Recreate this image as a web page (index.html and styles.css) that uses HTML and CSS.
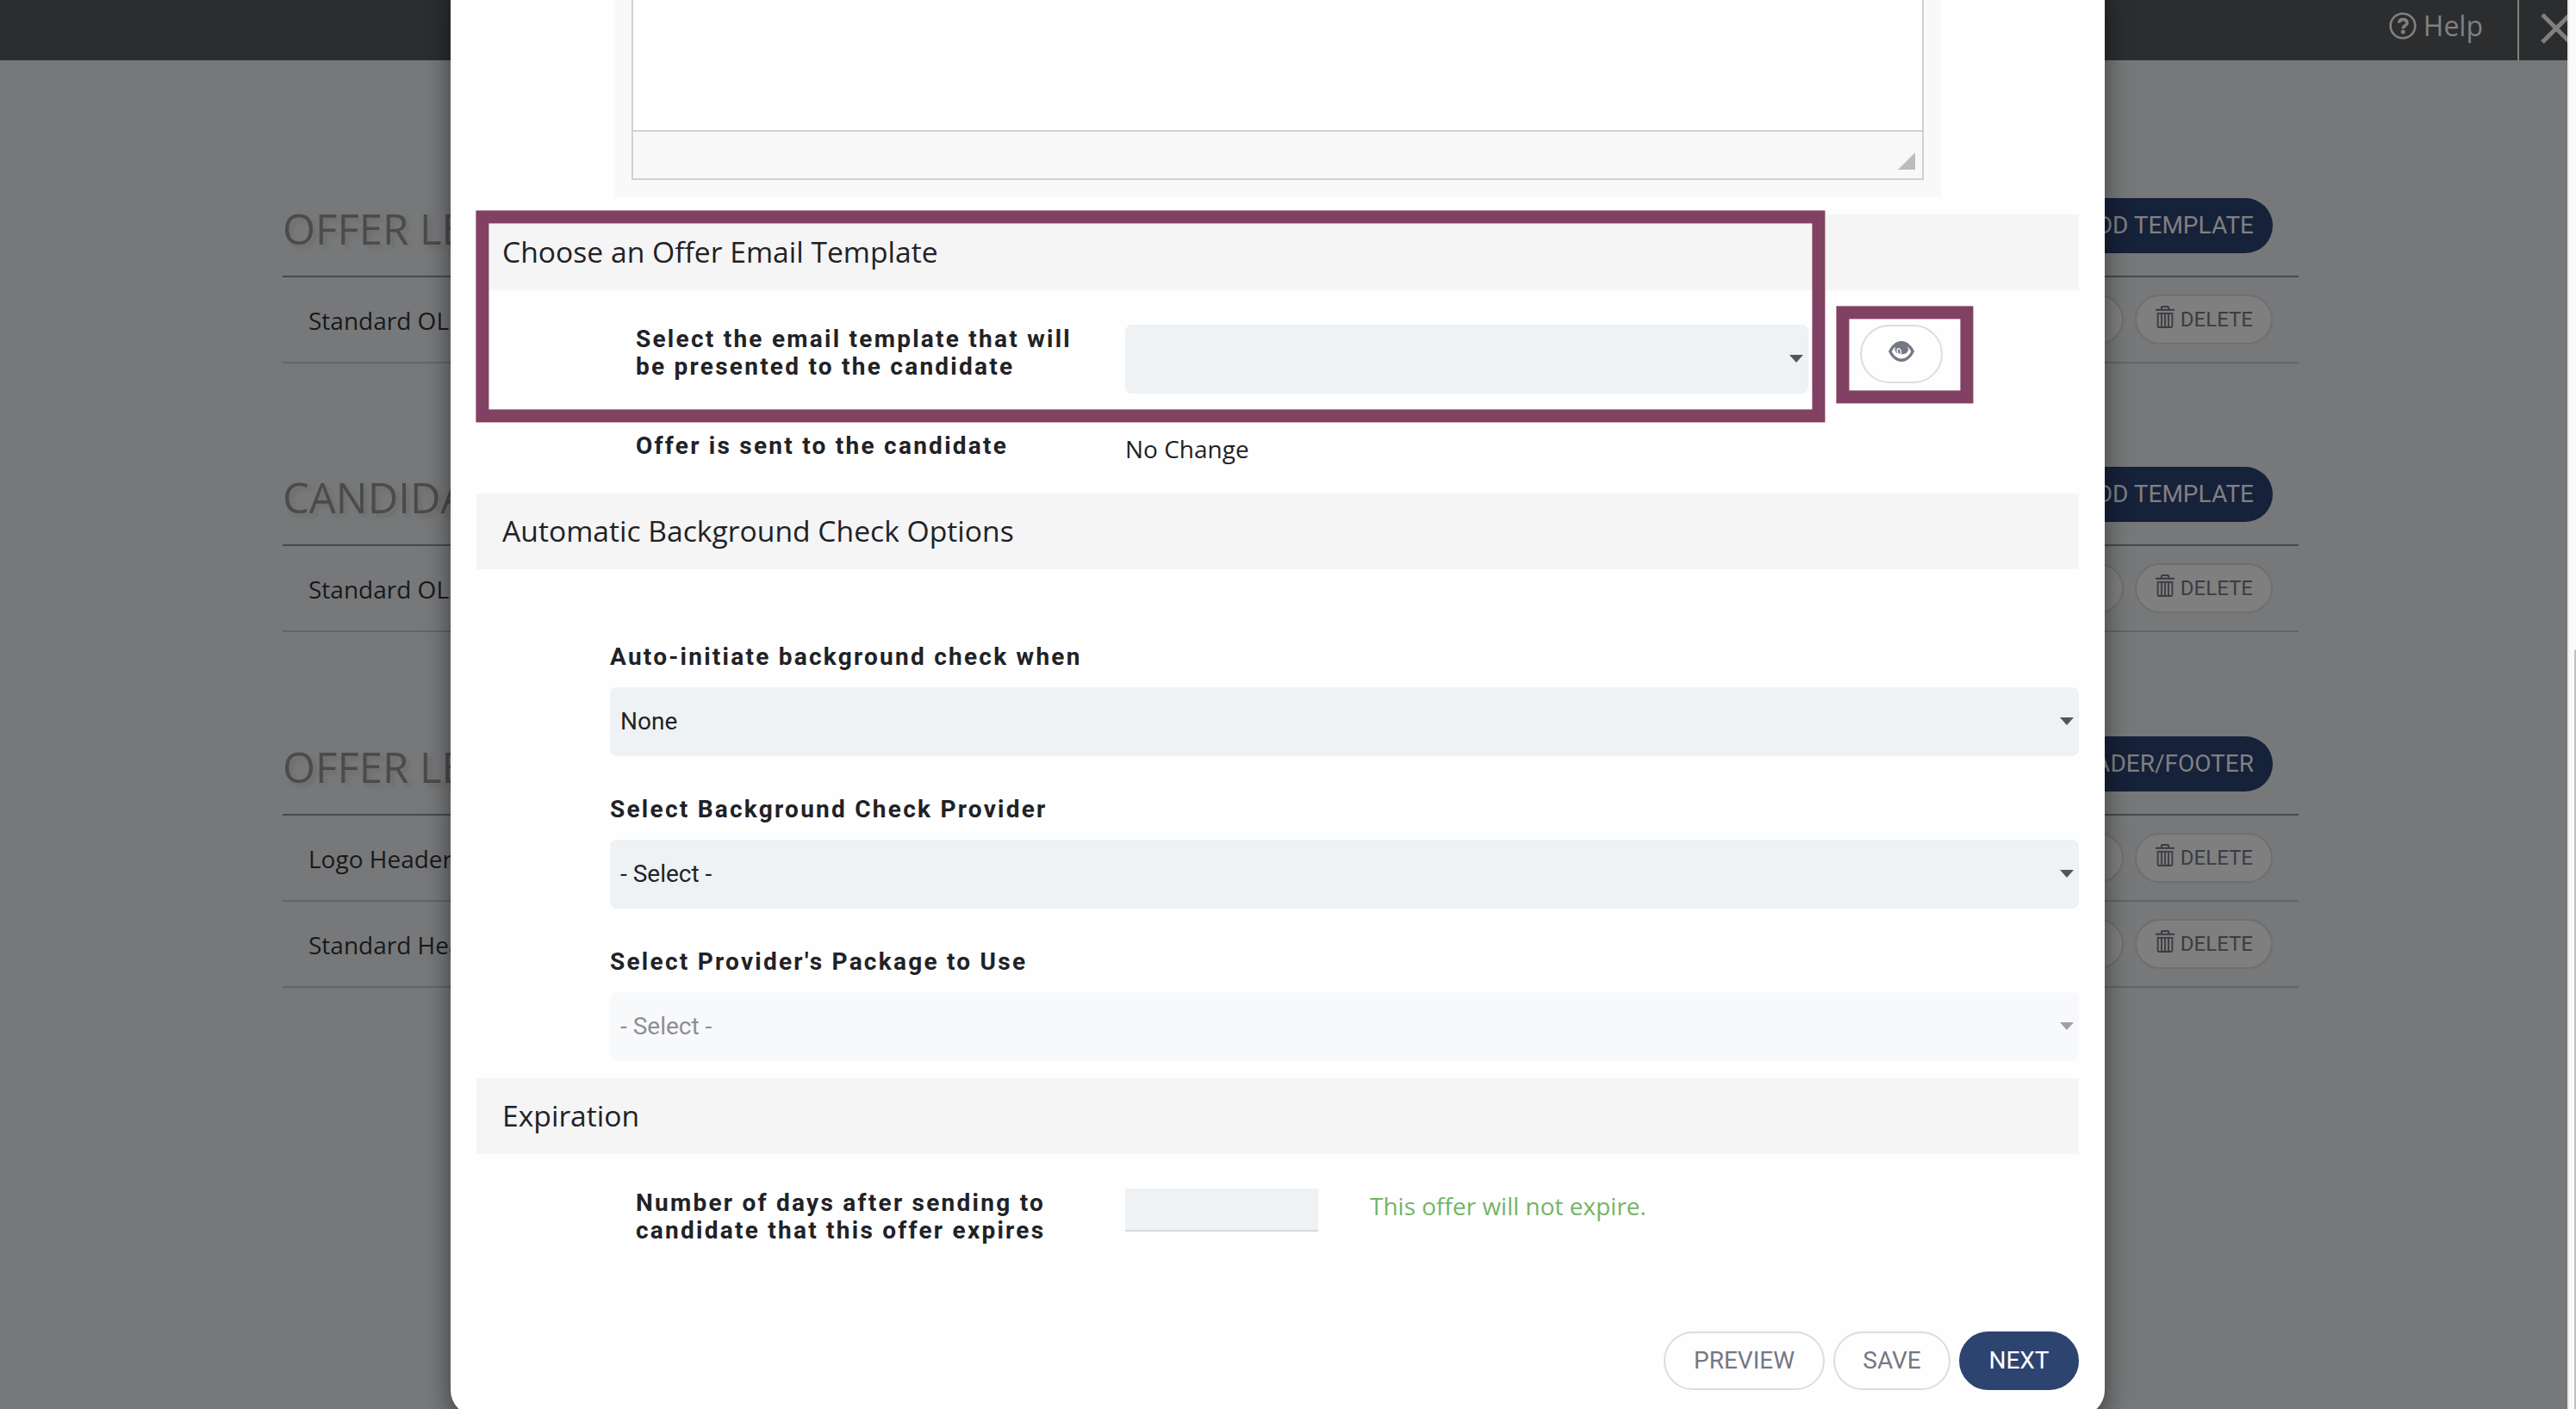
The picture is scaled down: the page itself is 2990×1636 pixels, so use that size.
FILE: index.html
```html
<!DOCTYPE html>
<html lang="en">
<head>
<meta charset="utf-8">
<title>Offer Letter Templates</title>
<link rel="stylesheet" href="styles.css">
</head>
<body>
<svg width="0" height="0" class="defs">
	<symbol id="trash" viewBox="0 0 22 26">
		<path d="M0 4.8h22M6.800 4V2.400q0-1.400 1.400-1.400h5.600q1.400 0 1.400 1.400V4" fill="none" stroke="currentColor" stroke-width="2"/>
		<path d="M2.600 8.800h16.800v14.700q0 1.500-1.500 1.500H4.100q-1.500 0-1.500-1.500zM7 9v15M11 9v15M15 9v15" fill="none" stroke="currentColor" stroke-width="1.800"/>
	</symbol>
</svg>
<div class="page">
	<div class="topbar">
		<div class="help">
			<svg width="32" height="32" viewBox="0 0 32 32">
				<circle cx="16" cy="16" r="14.300" fill="none" stroke="currentColor" stroke-width="2.600"/>
				<path d="M11.400 12.600q.4-4 4.800-4t4.800 3.600q0 2-2.200 3.400-2.400 1.400-2.400 3.600" fill="none" stroke="currentColor" stroke-width="3.600"/>
				<circle cx="16.200" cy="22.900" r="2.500" fill="currentColor"/>
			</svg>
			<span>Help</span>
		</div>
		<div class="close">
			<svg width="36" height="36" viewBox="0 0 36 36"><path d="M2 2l32 32M34 2L2 34" stroke="currentColor" stroke-width="5"/></svg>
		</div>
	</div>
	<div class="content">
		<div class="group">
			<div class="group-head"><h2>OFFER LE</h2><span class="add">ADD TEMPLATE</span></div>
			<div class="row"><span class="name">Standard OL</span><span class="pill">EDIT</span><span class="pill"><svg width="22" height="26"><use href="#trash"/></svg>DELETE</span></div>
		</div>
		<div class="group">
			<div class="group-head"><h2>CANDIDA</h2><span class="add">ADD TEMPLATE</span></div>
			<div class="row"><span class="name">Standard OL</span><span class="pill">EDIT</span><span class="pill"><svg width="22" height="26"><use href="#trash"/></svg>DELETE</span></div>
		</div>
		<div class="group">
			<div class="group-head"><h2>OFFER LE</h2><span class="add">HEADER/FOOTER</span></div>
			<div class="row"><span class="name">Logo Header</span><span class="pill">EDIT</span><span class="pill"><svg width="22" height="26"><use href="#trash"/></svg>DELETE</span></div>
			<div class="row"><span class="name">Standard Hea</span><span class="pill">EDIT</span><span class="pill"><svg width="22" height="26"><use href="#trash"/></svg>DELETE</span></div>
		</div>
	</div>

	<div class="modal">
		<div class="editor">
			<div class="editor-box">
				<div class="editor-text"></div>
				<div class="editor-foot"><i class="grip"></i></div>
			</div>
		</div>

		<h3>Choose an Offer Email Template</h3>
		<div class="field template">
			<label>Select the email template that will<br>be presented to the candidate</label>
			<div class="select small"><i class="caret"></i></div>
			<div class="eye">
				<svg width="30" height="24" viewBox="0 0 30 24">
					<path d="M15 0C22 0 27.500 6.500 30 12 27.500 17.500 22 24 15 24S2.500 17.500 0 12C2.500 6.500 8 0 15 0z" fill="currentColor"/>
					<path d="M8 6.500Q5 9 3.800 12.200 8 20.500 15 20.500t11.200-8.300Q25 9 22 6.500q1 2 1 4a8 6.500 0 0 1-15.500 0q0-2 .5-4z" fill="#fff"/>
					<ellipse cx="12.300" cy="12" rx="2" ry="3.400" fill="none" stroke="#fff" stroke-width="1.300" transform="rotate(-18 12.300 12)"/>
				</svg>
			</div>
		</div>
		<div class="field sent">
			<label>Offer is sent to the candidate</label>
			<span class="value">No Change</span>
		</div>

		<h3>Automatic Background Check Options</h3>
		<div class="checks">
			<label>Auto-initiate background check when</label>
			<div class="select">None<i class="caret"></i></div>
			<label>Select Background Check Provider</label>
			<div class="select">- Select -<i class="caret"></i></div>
			<label>Select Provider's Package to Use</label>
			<div class="select disabled">- Select -<i class="caret"></i></div>
		</div>

		<h3>Expiration</h3>
		<div class="field days">
			<label>Number of days after sending to<br>candidate that this offer expires</label>
			<div class="input"></div>
			<span class="note">This offer will not expire.</span>
		</div>

		<div class="buttons">
			<span class="btn preview">PREVIEW</span>
			<span class="btn save">SAVE</span>
			<span class="btn next">NEXT</span>
		</div>
	</div>
	<div class="mark mark-template"></div>
	<div class="mark mark-eye"></div>
</div>
<div class="scrollbar"><div class="thumb"></div></div>
</body>
</html>
```
FILE: styles.css
```css
* { box-sizing: border-box; }
body {
	margin: 0;
	height: 1636px;
	overflow: hidden;
	display: flex;
	font-family: "Open Sans", sans-serif;
	font-size: 28px;
	color: #212226;
}
h2, h3 { margin: 0; font-weight: normal; }
.defs { position: absolute; }
.page {
	position: relative;
	width: 2980px;
	height: 1636px;
	overflow: hidden;
	background: #77787a;
}

/* page behind the dialog */
.topbar {
	height: 70px;
	background: #2c2d2f;
	color: #808080;
	display: flex;
	justify-content: flex-end;
}
.help {
	display: flex;
	padding: 11px 40px 0 0;
	gap: 8px;
	font-size: 32px;
	line-height: 38px;
}
.help svg { margin-top: 3px; }
.close {
	width: 58px;
	border-left: 2px solid #808080;
	padding: 15px 0 0 25px;
	overflow: hidden;
}
.close svg { display: block; }
.content { padding: 150px 312px 0 328px; }
.group { height: 312.4px; }
.group-head {
	height: 102px;
	border-bottom: 2px solid #48494a;
	display: flex;
	justify-content: space-between;
	padding: 10px 30px 0 0;
}
h2 {
	font-size: 49px;
	line-height: 70px;
	color: #4b4b4b;
	text-shadow: 4px 4px 4px rgba(95,95,90,.4);
}
.add {
	height: 64px;
	border-radius: 32px;
	background: #16213a;
	color: #808080;
	padding: 0 22px;
	font-family: Roboto, sans-serif;
	line-height: 64px;
}
.row {
	height: 100px;
	border-bottom: 2px solid #636466;
	display: flex;
	align-items: center;
	gap: 13px;
	padding: 0 30px;
	color: #191919;
}
.name { flex: 1; line-height: 38px; padding-top: 2px; }
.pill {
	height: 58px;
	border: 2px solid #6e6f70;
	border-radius: 29px;
	background: #7f7f7f;
	color: #3b3c42;
	font: 24px/55px Roboto, sans-serif;
	padding: 0 21px 0 22px;
	display: flex;
	gap: 7px;
}
.pill svg { margin-top: 11px; }

/* dialog */
.modal {
	position: absolute;
	left: 523px;
	top: -30px;
	width: 1920px;
	height: 1674px;
	padding: 30px 30px 0;
	background: #fefefe;
	border-radius: 30px;
	box-shadow: 0 10px 30px rgba(0,0,0,.5);
}
.editor {
	height: 229px;
	margin: 0 160px 20px;
	padding: 0 20px 20px;
	background: #f9f9f9;
}
.editor-box {
	height: 209px;
	border: solid #d1d1d1;
	border-width: 0 2px 2px;
}
.editor-text { height: 153px; background: #fff; border-bottom: 2px solid #d1d1d1; }
.editor-foot {
	height: 54px;
	background: #f8f8f8;
	display: flex;
	justify-content: flex-end;
	align-items: flex-end;
	padding: 0 8px 10px;
}
.grip {
	border-left: 20px solid transparent;
	border-bottom: 20px solid #bcbcbc;
}
h3 {
	height: 88px;
	padding-left: 30px;
	background: #f5f5f5;
	font-size: 33.65px;
	line-height: 86px;
}
label {
	display: block;
	font: bold 28px/32px Roboto, sans-serif;
	letter-spacing: 2.25px;
	white-space: nowrap;
}
.field { display: flex; padding-left: 185px; }
.field label { width: 568px; padding-top: 1px; }
.template { height: 160px; padding-top: 40px; }
.select {
	height: 80px;
	border-radius: 8px;
	background: #eef2f5;
	padding: 0 6px 0 12px;
	font: 28px/78px Roboto, sans-serif;
	display: flex;
	justify-content: space-between;
	align-items: center;
}
.select.small { width: 793px; justify-content: flex-end; }
.caret {
	border: 8px solid transparent;
	border-top: 9px solid #555;
	border-bottom: 0;
	margin-top: -2px;
}
.disabled { background: #f8f9fb; color: #8e8f91; }
.disabled .caret { border-top-color: #a0a0a0; }
.eye {
	width: 96px;
	height: 68px;
	margin-left: 60px;
	border: 2px solid #ddd;
	border-radius: 34px;
	color: #747884;
	padding: 17px 0 0 31px;
}
.eye svg { display: block; }
.sent { height: 76px; padding-top: 4px; }
.value { line-height: 38px; padding-top: 1px; }
.checks { height: 591px; padding: 86px 0 0 155px; }
.checks label { height: 32px; margin-bottom: 19px; }
.checks .select { margin-bottom: 46px; }
.days { padding-top: 40px; height: 206px; }
.days .input {
	width: 224px;
	height: 50px;
	background: #eef2f5;
	border-bottom: 2px solid #d9d9d9;
}
.note { margin-left: 60px; color: #74b566; line-height: 38px; padding-top: 1px; }
.buttons { display: flex; justify-content: flex-end; gap: 10px; }
.btn {
	height: 68px;
	border: 2px solid #ddd;
	border-radius: 34px;
	color: #747884;
	font: 28px/64px Roboto, sans-serif;
	text-align: center;
}
.preview { width: 187px; }
.save { width: 136px; }
.next { width: 139px; background: #2d4471; border-color: #2d4471; color: #fff; }

/* callout frames */
.mark { position: absolute; border: 15px solid #814163; transform: translate(.4px, .4px); }
.mark-template { left: 552px; top: 244px; width: 1566px; height: 246px; }
.mark-eye { left: 2131px; top: 355px; width: 159px; height: 113px; }

.scrollbar {
	width: 10px;
	height: 1636px;
	background: #fafafa;
	border-left: 2px solid #e8e8e8;
	padding: 754px 0 0 6px;
}
.thumb { height: 882px; background: #c1c1c1; border-top-left-radius: 4px; }
```
